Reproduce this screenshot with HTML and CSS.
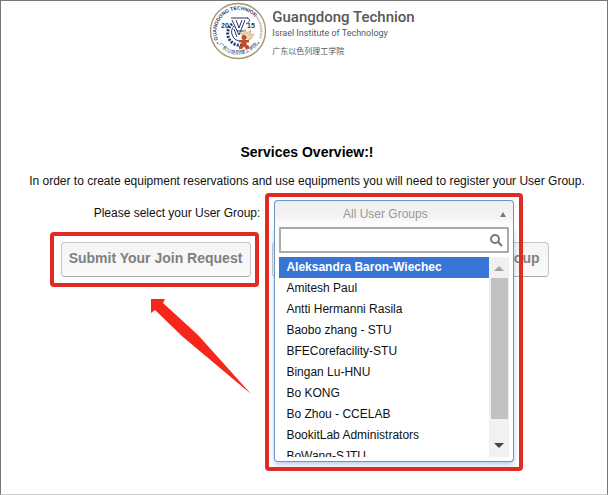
FILE: index.html
```html
<!DOCTYPE html>
<html lang="en">
	<head>
		<meta charset="UTF-8" />
		<meta name="viewport" content="width=device-width, initial-scale=1.0" />
		<title>Services Overview</title>
		<link rel="stylesheet" href="styles.css">
	</head>

	<body>
		<header class="brand">
			<svg class="emblem" viewBox="0 0 58 58" role="img" aria-label="Guangdong Technion emblem">
				<defs>
					<path id="arcTop" d="M9 38 A22 22 0 0 1 48 18" />
					<path id="arcBottom" d="M10 43 A24 24 0 0 0 48 43" />
				</defs>
				<circle cx="29" cy="29" r="27.5" fill="#fff" stroke="#a8956a" stroke-width="1.4" />
				<text class="ring-text"><textPath href="#arcTop">GUANGDONG TECHNION</textPath></text>
				<path d="M46 13 A23.500 23.500 0 0 1 51 37" fill="none" stroke="#b7b5ba" stroke-width="2.4" stroke-dasharray="1 .6" />
				<text class="ring-text-cn"><textPath href="#arcBottom" startOffset="50%" text-anchor="middle">广东以色列理工学院</textPath></text>
				<circle cx="8.5" cy="41" r=".8" fill="#24356e" />
				<circle cx="49.5" cy="41" r=".8" fill="#24356e" />
				<!-- Gear -->
				<path d="M33 43 A12 12 0 0 1 23 22" fill="none" stroke="#24356e" stroke-width="3" stroke-dasharray="2 1.3" />
				<path d="M32 39 A9 9 0 0 1 25 24" fill="none" stroke="#24356e" stroke-width="1" />
				<path d="M22 16 H39 M23 18 L30 33 L36 18 M27 18 L30 26 L33 18 M38 16 C42 17 41 20 37 22 M25 27 L28 35 M28 29 H35" fill="none" stroke="#24356e" stroke-width="1" />
				<text class="year" x="12" y="26">20</text>
				<text class="year" x="38" y="26">15</text>
				<!-- Flame and figure -->
				<path d="M33 34 L31 30 L35 32 L36 27 L38 31 L42 28 L41 33 L45 32 L42 37 L39 38" fill="#e9d6b5" stroke="#c9a46b" stroke-width=".7" />
				<circle cx="35" cy="35.5" r="2.5" fill="#c14c27" />
				<path d="M30 38 H40 V40.500 H37.500 V42.500 L40 44 V47 H37 L35 44.500 L33 47 H30 V44 L32.500 42.500 V40.500 H30 Z" fill="#c14c27" />
			</svg>
			<div class="brand-text">
				<div class="brand-name">Guangdong Technion</div>
				<div class="brand-sub">Israel Institute of Technology</div>
				<div class="brand-cn" lang="zh">广东以色列理工学院</div>
			</div>
		</header>

		<main class="overview">
			<h1 class="title">Services Overview:!</h1>
			<p class="intro">In order to create equipment reservations and use equipments you will need to register your User Group.</p>

			<form class="group-form">
				<div class="group-row">
					<label for="groupButton">Please select your User Group:</label>
					<div class="dropdown">
						<button type="button" id="groupButton" class="dropdown-toggle" aria-haspopup="listbox" aria-expanded="true">
							<span class="dropdown-value">All User Groups</span>
							<svg class="caret" viewBox="0 0 6 5" aria-hidden="true"><path d="M0 5 L3 0 L6 5 Z" /></svg>
						</button>
						<div class="dropdown-panel" id="groupPanel">
							<div class="search">
								<input type="text" id="groupSearch" class="search-input" aria-label="Search user groups" autocomplete="off" />
								<svg class="search-icon" viewBox="0 0 13 13" aria-hidden="true">
									<circle cx="5" cy="5" r="4" />
									<path d="M7.800 7.800 L12 12" />
								</svg>
							</div>
							<div class="list-wrap">
								<select class="group-list" id="groupList" size="9" aria-label="User groups">
									<option selected>Aleksandra Baron-Wiechec</option>
									<option>Amitesh Paul</option>
									<option>Antti Hermanni Rasila</option>
									<option>Baobo zhang - STU</option>
									<option>BFECorefacility-STU</option>
									<option>Bingan Lu-HNU</option>
									<option>Bo KONG</option>
									<option>Bo Zhou - CCELAB</option>
									<option>BookitLab Administrators</option>
									<option>BoWang-SJTU</option>
								</select>
								<div class="scrollbar" aria-hidden="true">
									<svg class="scroll-arrow up" viewBox="0 0 10 5"><path d="M0 5 L5 0 L10 5 Z" /></svg>
									<div class="scroll-thumb"></div>
									<svg class="scroll-arrow down" viewBox="0 0 10 5"><path d="M0 0 L5 5 L10 0 Z" /></svg>
								</div>
							</div>
						</div>
						<div class="highlight"></div>
					</div>
				</div>

				<div class="actions">
					<div class="action">
						<button type="submit" class="action-button">Submit Your Join Request</button>
						<div class="highlight"></div>
						<svg class="pointer" viewBox="0 0 100 95" aria-hidden="true">
							<path d="M0 0 L14 0 L12 4 L47 36 L100 95 L32 38 L4 11 L0 14 Z" />
						</svg>
					</div>
					<button type="button" class="action-button wide">Register Your New User Group</button>
				</div>
			</form>
		</main>
	</body>
</html>
```
FILE: styles.css
```css
:root {
	--text-color: #111;
	--muted: #808080;
	--highlight: #e12a22;
	--accent: #3875d7;
	--panel-border: #6b95c8;
}

* {
	box-sizing: border-box;
}

body {
	margin: 0;
	min-height: 100vh;
	border: 1px solid #777;
	border-bottom-color: #ccc;
	background-color: #fff;
	color: var(--text-color);
	font-family: "Liberation Sans", Arial, sans-serif;
	font-size: 12px;
	line-height: 16px;
}

.brand {
	display: flex;
	justify-content: center;
	gap: 5px;
	padding: 1px 0 0 16px;
}

.emblem {
	width: 58px;
	height: 58px;
}

.ring-text {
	font: bold 5px "Liberation Sans", Arial, sans-serif;
	fill: #24356e;
}

.ring-text-cn {
	font: 5px "Noto Sans CJK SC", sans-serif;
	fill: #24356e;
}

.year {
	font: bold 7px "Liberation Sans", Arial, sans-serif;
	fill: #24356e;
}

.brand-text {
	padding-top: 6px;
	color: #58585a;
	white-space: nowrap;
}

.brand-name {
	font: 500 15px/18px Roboto, sans-serif;
}

.brand-sub {
	font: 9px/14px Roboto, sans-serif;
}

.brand-cn {
	margin-top: 5px;
	font: 8px/12px "Noto Sans CJK SC", sans-serif;
}

.overview {
	padding-top: 83px;
	text-align: center;
}

.title {
	margin: 0;
	padding-left: 6px;
	font-size: 14px;
	line-height: 18px;
	color: #000;
}

.intro {
	margin: 12px 0 11px;
	padding-left: 6px;
}

.group-row {
	display: flex;
	justify-content: center;
	align-items: flex-start;
	gap: 14px;
}

.group-row label {
	padding-top: 5px;
}

/* The open list hangs below the toggle and covers the buttons */
.dropdown {
	position: relative;
	z-index: 2;
	width: 240px;
	height: 27px;
	text-align: left;
}

.dropdown-toggle {
	display: flex;
	align-items: center;
	width: 100%;
	height: 27px;
	padding: 0 7px;
	border: 1px solid var(--panel-border);
	border-bottom: 0;
	border-radius: 4px 4px 0 0;
	background: linear-gradient(#eee, #f4f4f4 60%, #fff);
	color: #999;
	font: inherit;
}

.dropdown-value {
	flex: 1;
	padding-right: 12px;
	text-align: center;
}

.caret {
	width: 6px;
	height: 5px;
	fill: #777;
}

.dropdown-panel {
	position: absolute;
	top: 27px;
	left: 0;
	width: 100%;
	padding: 0 4px 4px;
	border: 1px solid var(--panel-border);
	border-top: 0;
	border-radius: 0 0 4px 4px;
	background-color: #fff;
	box-shadow: 0 3px 5px rgba(90, 140, 210, 0.4);
}

.search {
	display: flex;
	align-items: center;
	height: 26px;
	padding-right: 4px;
	border: 2px solid #aaa;
	border-radius: 1px;
}

.search-input {
	flex: 1;
	min-width: 0;
	border: 0;
	outline: 0;
	background: none;
	font: inherit;
}

.search-icon {
	width: 13px;
	height: 13px;
	fill: none;
	stroke: #777;
	stroke-width: 2;
}

.list-wrap {
	display: flex;
	height: 200px;
	margin-top: 4px;
}

.group-list {
	flex: 1;
	min-width: 0;
	height: 100%;
	padding: 0;
	border: 0;
	outline: 0;
	border-radius: 0;
	overflow: hidden;
	background-color: #fff;
	color: var(--text-color);
	font: inherit;
}

.group-list option {
	height: 21px;
	min-height: 21px;
	padding: 3px 7px 2px;
	line-height: 16px;
}

.group-list option:checked {
	background: var(--accent) linear-gradient(var(--accent), var(--accent));
	color: #fff;
	font-weight: bold;
}

.scrollbar {
	display: flex;
	flex-direction: column;
	align-items: center;
	width: 20px;
	background-color: #f1f1f1;
}

.scroll-arrow {
	width: 10px;
	height: 5px;
}

.scroll-arrow.up {
	margin: 9px 0 7px;
	fill: #a3a3a3;
}

.scroll-arrow.down {
	margin: auto 0 9px;
	fill: #444;
}

.scroll-thumb {
	width: 17px;
	height: 141px;
	background-color: #c1c1c1;
}

.actions {
	display: flex;
	justify-content: center;
	gap: 21px;
	margin-top: 15px;
	padding-left: 1px;
}

.action {
	position: relative;
}

.action-button {
	width: 190px;
	height: 35px;
	padding: 0 0 4px;
	border: 1px solid #c4c4c4;
	border-bottom-color: #aaa;
	border-radius: 4px;
	background: linear-gradient(#f4f4f4, #fafafa);
	color: var(--muted);
	font: bold 14px "Liberation Sans", Arial, sans-serif;
	white-space: nowrap;
}

.action-button.wide {
	width: 277px;
	padding-right: 8px;
	text-align: right;
}

.highlight {
	position: absolute;
	inset: -10px -8px -10px -11px;
	border: 4px solid var(--highlight);
	border-radius: 4px;
	pointer-events: none;
}

.dropdown .highlight {
	inset: -7px -9px -244px -9px;
}

.pointer {
	position: absolute;
	top: 57px;
	left: 90px;
	width: 100px;
	height: 95px;
	fill: #f7261b;
}
```
